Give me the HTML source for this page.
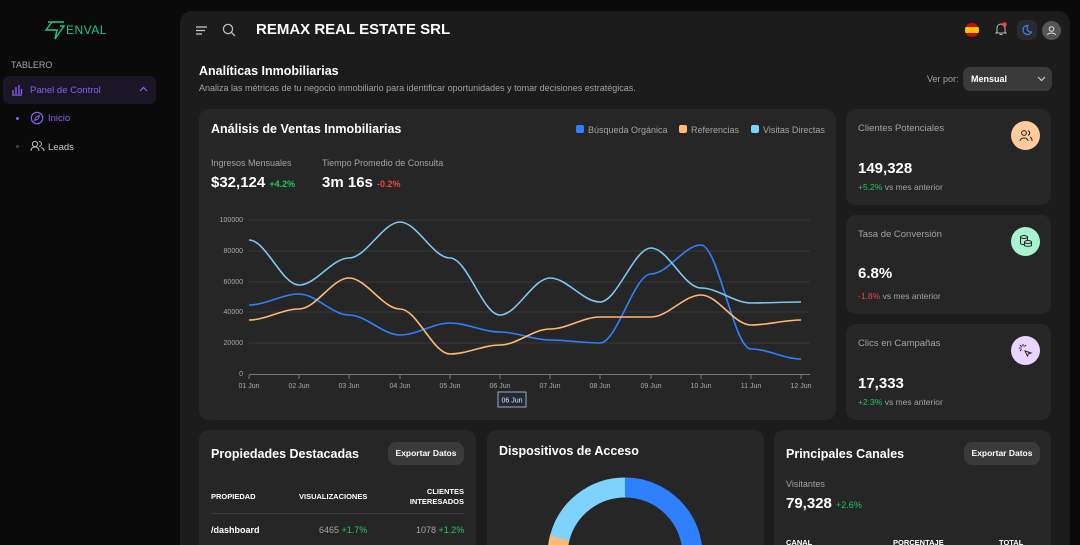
<!DOCTYPE html>
<html><head><meta charset="utf-8">
<style>
*{box-sizing:border-box;margin:0;padding:0}
html,body{width:1080px;height:545px;overflow:hidden}
body{background:#0a0a0a;font-family:"Liberation Sans",sans-serif;color:#fff;position:relative}
.abs{position:absolute}
.main{position:absolute;left:180px;top:11px;width:890px;height:534px;background:#1c1c1c;border-radius:12px 12px 0 0}
.card{position:absolute;background:#262626;border-radius:10px}
.muted{color:#a3a3a3}
.g{color:#22c55e}.r{color:#ef4444}
.btn{position:absolute;background:#3a3a3a;border-radius:8px;font-size:8.5px;font-weight:bold;color:#fff;text-align:center;line-height:23px;width:76px;height:23px}
.ic{position:absolute;width:29px;height:29px;border-radius:50%}
</style></head><body>
<!-- sidebar -->
<svg class="abs" style="left:44px;top:18px" width="72" height="24" viewBox="0 0 72 24">
<path d="M4 4 L20 4 M8 4 L2 12 L13 12 L11 21 L20 8 L16 8" fill="none" stroke="#22c58a" stroke-width="1.4"/>
<text x="22" y="16" font-family="Liberation Sans" font-size="12" fill="#22c58a" letter-spacing="0.5">ENVAL</text>
</svg>
<div class="abs" style="left:11px;top:60px;font-size:9px;color:#a3a3a3">TABLERO</div>
<div class="abs" style="left:3px;top:76px;width:153px;height:28px;background:#1a1625;border-radius:6px"></div>
<svg class="abs" style="left:11px;top:84px" width="12" height="12" viewBox="0 0 12 12"><path d="M1 11H11M2 10V6M5 10V3M8 10V1M10.5 10V5" stroke="#8b5cf6" stroke-width="1.3" fill="none"/></svg>
<div class="abs" style="left:30px;top:85px;font-size:9.5px;color:#8b5cf6">Panel de Control</div>
<svg class="abs" style="left:139px;top:86px" width="9" height="7"><path d="M1 5L4.5 1.5L8 5" stroke="#8b5cf6" fill="none" stroke-width="1.2"/></svg>
<div class="abs" style="left:16px;top:117px;width:3px;height:3px;border-radius:50%;background:#8b5cf6"></div>
<svg class="abs" style="left:30px;top:111px" width="14" height="14" viewBox="0 0 14 14"><circle cx="7" cy="7" r="5.7" stroke="#8b5cf6" fill="none" stroke-width="1.2"/><path d="M9.5 4.5L8 8L4.5 9.5L6 6Z" stroke="#8b5cf6" fill="none"/></svg>
<div class="abs" style="left:48px;top:113px;font-size:9.5px;color:#8b5cf6">Inicio</div>
<div class="abs" style="left:16px;top:145px;width:3px;height:3px;border-radius:50%;background:#444"></div>
<svg class="abs" style="left:30px;top:140px" width="15" height="12" viewBox="0 0 15 12"><circle cx="5" cy="4" r="2.6" stroke="#bbb" fill="none"/><path d="M1 11C1 8 3 7 5 7S9 8 9 11" stroke="#bbb" fill="none"/><path d="M9 1.5A2.5 2.5 0 0 1 9 6.5M11 7.5C13 8 14 9 14 11" stroke="#bbb" fill="none"/></svg>
<div class="abs" style="left:48px;top:142px;font-size:9.5px;color:#ccc">Leads</div>

<div class="main"></div>
<!-- header -->
<svg class="abs" style="left:195px;top:25px" width="13" height="11"><path d="M1 2H12M1 5.5H10M1 9H7" stroke="#ccc" stroke-width="1.3"/></svg>
<svg class="abs" style="left:222px;top:23px" width="14" height="14"><circle cx="6" cy="6" r="4.6" stroke="#bbb" fill="none" stroke-width="1.3"/><path d="M9.5 9.5L13 13" stroke="#bbb" stroke-width="1.3"/></svg>
<div class="abs" style="left:256px;top:21px;font-size:15px;font-weight:bold">REMAX REAL ESTATE SRL</div>
<div class="abs" style="left:965px;top:23px;width:14px;height:14px;border-radius:50%;background:linear-gradient(#c60b1e 28%,#ffc400 28%,#ffc400 72%,#c60b1e 72%)"></div>
<svg class="abs" style="left:994px;top:22px" width="14" height="14"><path d="M3 10V6A4 4 0 0 1 11 6V10L12 11H2Z M5.5 12.5H8.5" stroke="#bbb" fill="none"/><circle cx="10.5" cy="2.5" r="2.3" fill="#ef4444"/></svg>
<div class="abs" style="left:1017px;top:20px;width:20px;height:20px;border-radius:6px;background:#2a2a2e"></div>
<svg class="abs" style="left:1021px;top:24px" width="12" height="12"><path d="M7 1.5A4.5 4.5 0 1 0 10.5 8 A4 4 0 0 1 7 1.5Z" stroke="#3b82f6" fill="none" stroke-width="1.2"/></svg>
<div class="abs" style="left:1042px;top:21px;width:19px;height:19px;border-radius:50%;background:#555"></div>
<svg class="abs" style="left:1046px;top:25px" width="11" height="11"><circle cx="5.5" cy="4" r="2.3" stroke="#ddd" fill="none"/><path d="M1.5 10C2 7.5 9 7.5 9.5 10" stroke="#ddd" fill="none"/></svg>

<div class="abs" style="left:199px;top:64px;font-size:12.5px;font-weight:bold">Analíticas Inmobiliarias</div>
<div class="abs muted" style="left:199px;top:83px;font-size:9px">Analiza las métricas de tu negocio inmobiliario para identificar oportunidades y tomar decisiones estratégicas.</div>
<div class="abs muted" style="left:927px;top:74px;font-size:9px">Ver por:</div>
<div class="abs" style="left:963px;top:67px;width:89px;height:24px;background:#3a3a3a;border-radius:7px;font-size:9px;font-weight:bold;line-height:24px;padding-left:8px">Mensual</div>
<svg class="abs" style="left:1037px;top:76px" width="9" height="6"><path d="M1 1L4.5 4.5L8 1" stroke="#ccc" fill="none" stroke-width="1.2"/></svg>

<!-- chart card -->
<div class="card" style="left:199px;top:109px;width:637px;height:311px"></div>
<div class="abs" style="left:211px;top:122px;font-size:12.5px;font-weight:bold">Análisis de Ventas Inmobiliarias</div>
<div class="abs" style="left:576px;top:125px;width:8px;height:8px;border-radius:2px;background:#2f80ff"></div>
<div class="abs muted" style="left:588px;top:125px;font-size:9px">Búsqueda Orgánica</div>
<div class="abs" style="left:679px;top:125px;width:8px;height:8px;border-radius:2px;background:#fdba74"></div>
<div class="abs muted" style="left:691px;top:125px;font-size:9px">Referencias</div>
<div class="abs" style="left:751px;top:125px;width:8px;height:8px;border-radius:2px;background:#7dd3fc"></div>
<div class="abs muted" style="left:763px;top:125px;font-size:9px">Visitas Directas</div>
<div class="abs muted" style="left:211px;top:158px;font-size:9px">Ingresos Mensuales</div>
<div class="abs" style="left:211px;top:174px;font-size:15px;font-weight:bold">$32,124 <span class="g" style="font-size:9px">+4.2%</span></div>
<div class="abs muted" style="left:322px;top:158px;font-size:9px">Tiempo Promedio de Consulta</div>
<div class="abs" style="left:322px;top:174px;font-size:15px;font-weight:bold">3m 16s <span class="r" style="font-size:9px">-0.2%</span></div>
<svg class="abs" style="left:0;top:0" width="1080" height="545">
<g stroke="#383838" stroke-width="1"><path d="M249 220H810M249 251H810M249 282H810M249 312H810M249 343H810"/></g>
<path d="M249 374.5H810" stroke="#777"/>
<g font-family="Liberation Sans" font-size="7" fill="#aaa" text-anchor="end">
<text x="243" y="222">100000</text><text x="243" y="253">80000</text><text x="243" y="284">60000</text><text x="243" y="314">40000</text><text x="243" y="345">20000</text><text x="243" y="376">0</text></g>
<g font-family="Liberation Sans" font-size="7" fill="#aaa" text-anchor="middle">
<text x="249" y="388">01 Jun</text><text x="299" y="388">02 Jun</text><text x="349" y="388">03 Jun</text><text x="400" y="388">04 Jun</text><text x="450" y="388">05 Jun</text><text x="500" y="388">06 Jun</text><text x="550" y="388">07 Jun</text><text x="600" y="388">08 Jun</text><text x="651" y="388">09 Jun</text><text x="701" y="388">10 Jun</text><text x="751" y="388">11 Jun</text><text x="801" y="388">12 Jun</text></g>
<g stroke="#777"><path d="M249 375v4M299 375v4M349 375v4M400 375v4M450 375v4M500 375v4M550 375v4M600 375v4M651 375v4M701 375v4M751 375v4M801 375v4"/></g>
<rect x="498" y="392" width="28" height="15" fill="#1e293b" stroke="#aaa"/>
<text x="512" y="402.5" font-family="Liberation Sans" font-size="7" fill="#eee" text-anchor="middle">06 Jun</text>
<g fill="none" stroke-width="1.6">
<path stroke="#2f80ff" d="M249 305C266 305,282 294,299 294C316 294,332 315,349 315C366 315,383 335,400 335C417 335,433 323,450 323C467 323,483 332,500 332C517 332,533 340,550 340C567 340,583 343,600 343C617 343,634 274,651 274C668 274,684 245,701 245C718 245,734 349,751 349C768 349,784 359,801 359"/>
<path stroke="#fdba74" d="M249 320C266 320,282 309,299 309C316 309,332 278,349 278C366 278,383 309,400 309C417 309,433 354,450 354C467 354,483 345,500 345C517 345,533 329,550 329C567 329,583 317,600 317C617 317,634 317,651 317C668 317,684 295,701 295C718 295,734 325,751 325C768 325,784 320,801 320"/>
<path stroke="#7dc8f0" d="M249 240C266 240,282 285,299 285C316 285,332 258,349 258C366 258,383 222,400 222C417 222,433 258,450 258C467 258,483 315,500 315C517 315,533 278,550 278C567 278,583 302,600 302C617 302,634 248,651 248C668 248,684 288,701 288C718 288,734 303,751 303C768 303,784 302,801 302"/>
</g>
</svg>

<!-- right stat cards -->
<div class="card" style="left:846px;top:109px;width:205px;height:96px"></div>
<div class="abs muted" style="left:858px;top:123px;font-size:9.5px">Clientes Potenciales</div>
<div class="ic" style="left:1011px;top:121px;background:#fdcb9e"></div>
<svg class="abs" style="left:1019px;top:129px" width="14" height="13"><circle cx="5" cy="4" r="2.4" stroke="#222" fill="none"/><path d="M1 12C1 8 9 8 9 12M9 1.7A2.4 2.4 0 0 1 9 6.3M11 8C12.5 8.5 13 10 13 12" stroke="#222" fill="none"/></svg>
<div class="abs" style="left:858px;top:160px;font-size:15px;font-weight:bold">149,328</div>
<div class="abs muted" style="left:858px;top:182px;font-size:8.5px"><span class="g">+5.2%</span> vs mes anterior</div>

<div class="card" style="left:846px;top:215px;width:205px;height:99px"></div>
<div class="abs muted" style="left:858px;top:229px;font-size:9.5px">Tasa de Conversión</div>
<div class="ic" style="left:1011px;top:227px;background:#a7f3d0"></div>
<svg class="abs" style="left:1019px;top:234px" width="14" height="14"><ellipse cx="5" cy="3" rx="3.5" ry="1.5" stroke="#222" fill="none"/><path d="M1.5 3V9C1.5 10 3 10.5 5 10.5M8.5 3V6" stroke="#222" fill="none"/><ellipse cx="9" cy="8" rx="3.5" ry="1.5" stroke="#222" fill="none"/><path d="M5.5 8V11.5C5.5 12.5 12.5 12.5 12.5 11.5V8" stroke="#222" fill="none"/></svg>
<div class="abs" style="left:858px;top:265px;font-size:15px;font-weight:bold">6.8%</div>
<div class="abs muted" style="left:858px;top:291px;font-size:8.5px"><span class="r">-1.8%</span> vs mes anterior</div>

<div class="card" style="left:846px;top:324px;width:205px;height:96px"></div>
<div class="abs muted" style="left:858px;top:338px;font-size:9.5px">Clics en Campañas</div>
<div class="ic" style="left:1011px;top:336px;background:#e9d5ff"></div>
<svg class="abs" style="left:1018px;top:343px" width="15" height="15"><path d="M7 8L13 10L10.5 10.8L9.5 13Z" stroke="#222" fill="none"/><path d="M5 1V3.5M1 5H3.5M2 2L3.7 3.7M8 2L6.5 3.5M2 8L3.5 6.5" stroke="#222"/></svg>
<div class="abs" style="left:858px;top:375px;font-size:15px;font-weight:bold">17,333</div>
<div class="abs muted" style="left:858px;top:397px;font-size:8.5px"><span class="g">+2.3%</span> vs mes anterior</div>

<!-- bottom cards -->
<div class="card" style="left:199px;top:430px;width:277px;height:130px"></div>
<div class="abs" style="left:211px;top:447px;font-size:12.5px;font-weight:bold">Propiedades Destacadas</div>
<div class="btn" style="left:388px;top:442px">Exportar Datos</div>
<div class="abs" style="left:211px;top:492px;font-size:7.5px;font-weight:bold">PROPIEDAD</div>
<div class="abs" style="left:299px;top:492px;font-size:7.5px;font-weight:bold">VISUALIZACIONES</div>
<div class="abs" style="left:400px;top:487px;font-size:7.5px;font-weight:bold;text-align:right;width:64px;line-height:10px">CLIENTES<br>INTERESADOS</div>
<div class="abs" style="left:211px;top:513px;width:253px;height:1px;background:#3a3a3a"></div>
<div class="abs" style="left:211px;top:525px;font-size:9px;font-weight:bold">/dashboard</div>
<div class="abs" style="left:319px;top:525px;font-size:9px"><span class="muted">6465</span> <span class="g">+1.7%</span></div>
<div class="abs" style="left:416px;top:525px;font-size:9px"><span class="muted">1078</span> <span class="g">+1.2%</span></div>

<div class="card" style="left:487px;top:430px;width:277px;height:130px"></div>
<div class="abs" style="left:499px;top:444px;font-size:12.5px;font-weight:bold">Dispositivos de Acceso</div>
<svg class="abs" style="left:540px;top:470px" width="170" height="75">
<g transform="rotate(-90 85 85)" fill="none" stroke-width="20">
<circle cx="85" cy="85" r="67.5" stroke="#2f80ff" stroke-dasharray="283 1000"/>
<circle cx="85" cy="85" r="67.5" stroke="#fdba74" stroke-dasharray="53 1000" stroke-dashoffset="-283"/>
<circle cx="85" cy="85" r="67.5" stroke="#7dd3fc" stroke-dasharray="89 1000" stroke-dashoffset="-335"/>
</g>
</svg>

<div class="card" style="left:774px;top:430px;width:277px;height:130px"></div>
<div class="abs" style="left:786px;top:447px;font-size:12.5px;font-weight:bold">Principales Canales</div>
<div class="btn" style="left:964px;top:442px">Exportar Datos</div>
<div class="abs muted" style="left:786px;top:479px;font-size:9px">Visitantes</div>
<div class="abs" style="left:786px;top:495px;font-size:15px;font-weight:bold">79,328 <span class="g" style="font-size:9px;font-weight:normal">+2.6%</span></div>
<div class="abs" style="left:786px;top:538px;font-size:7.5px;font-weight:bold">CANAL</div>
<div class="abs" style="left:893px;top:538px;font-size:7.5px;font-weight:bold">PORCENTAJE</div>
<div class="abs" style="left:999px;top:538px;font-size:7.5px;font-weight:bold">TOTAL</div>
</body></html>
